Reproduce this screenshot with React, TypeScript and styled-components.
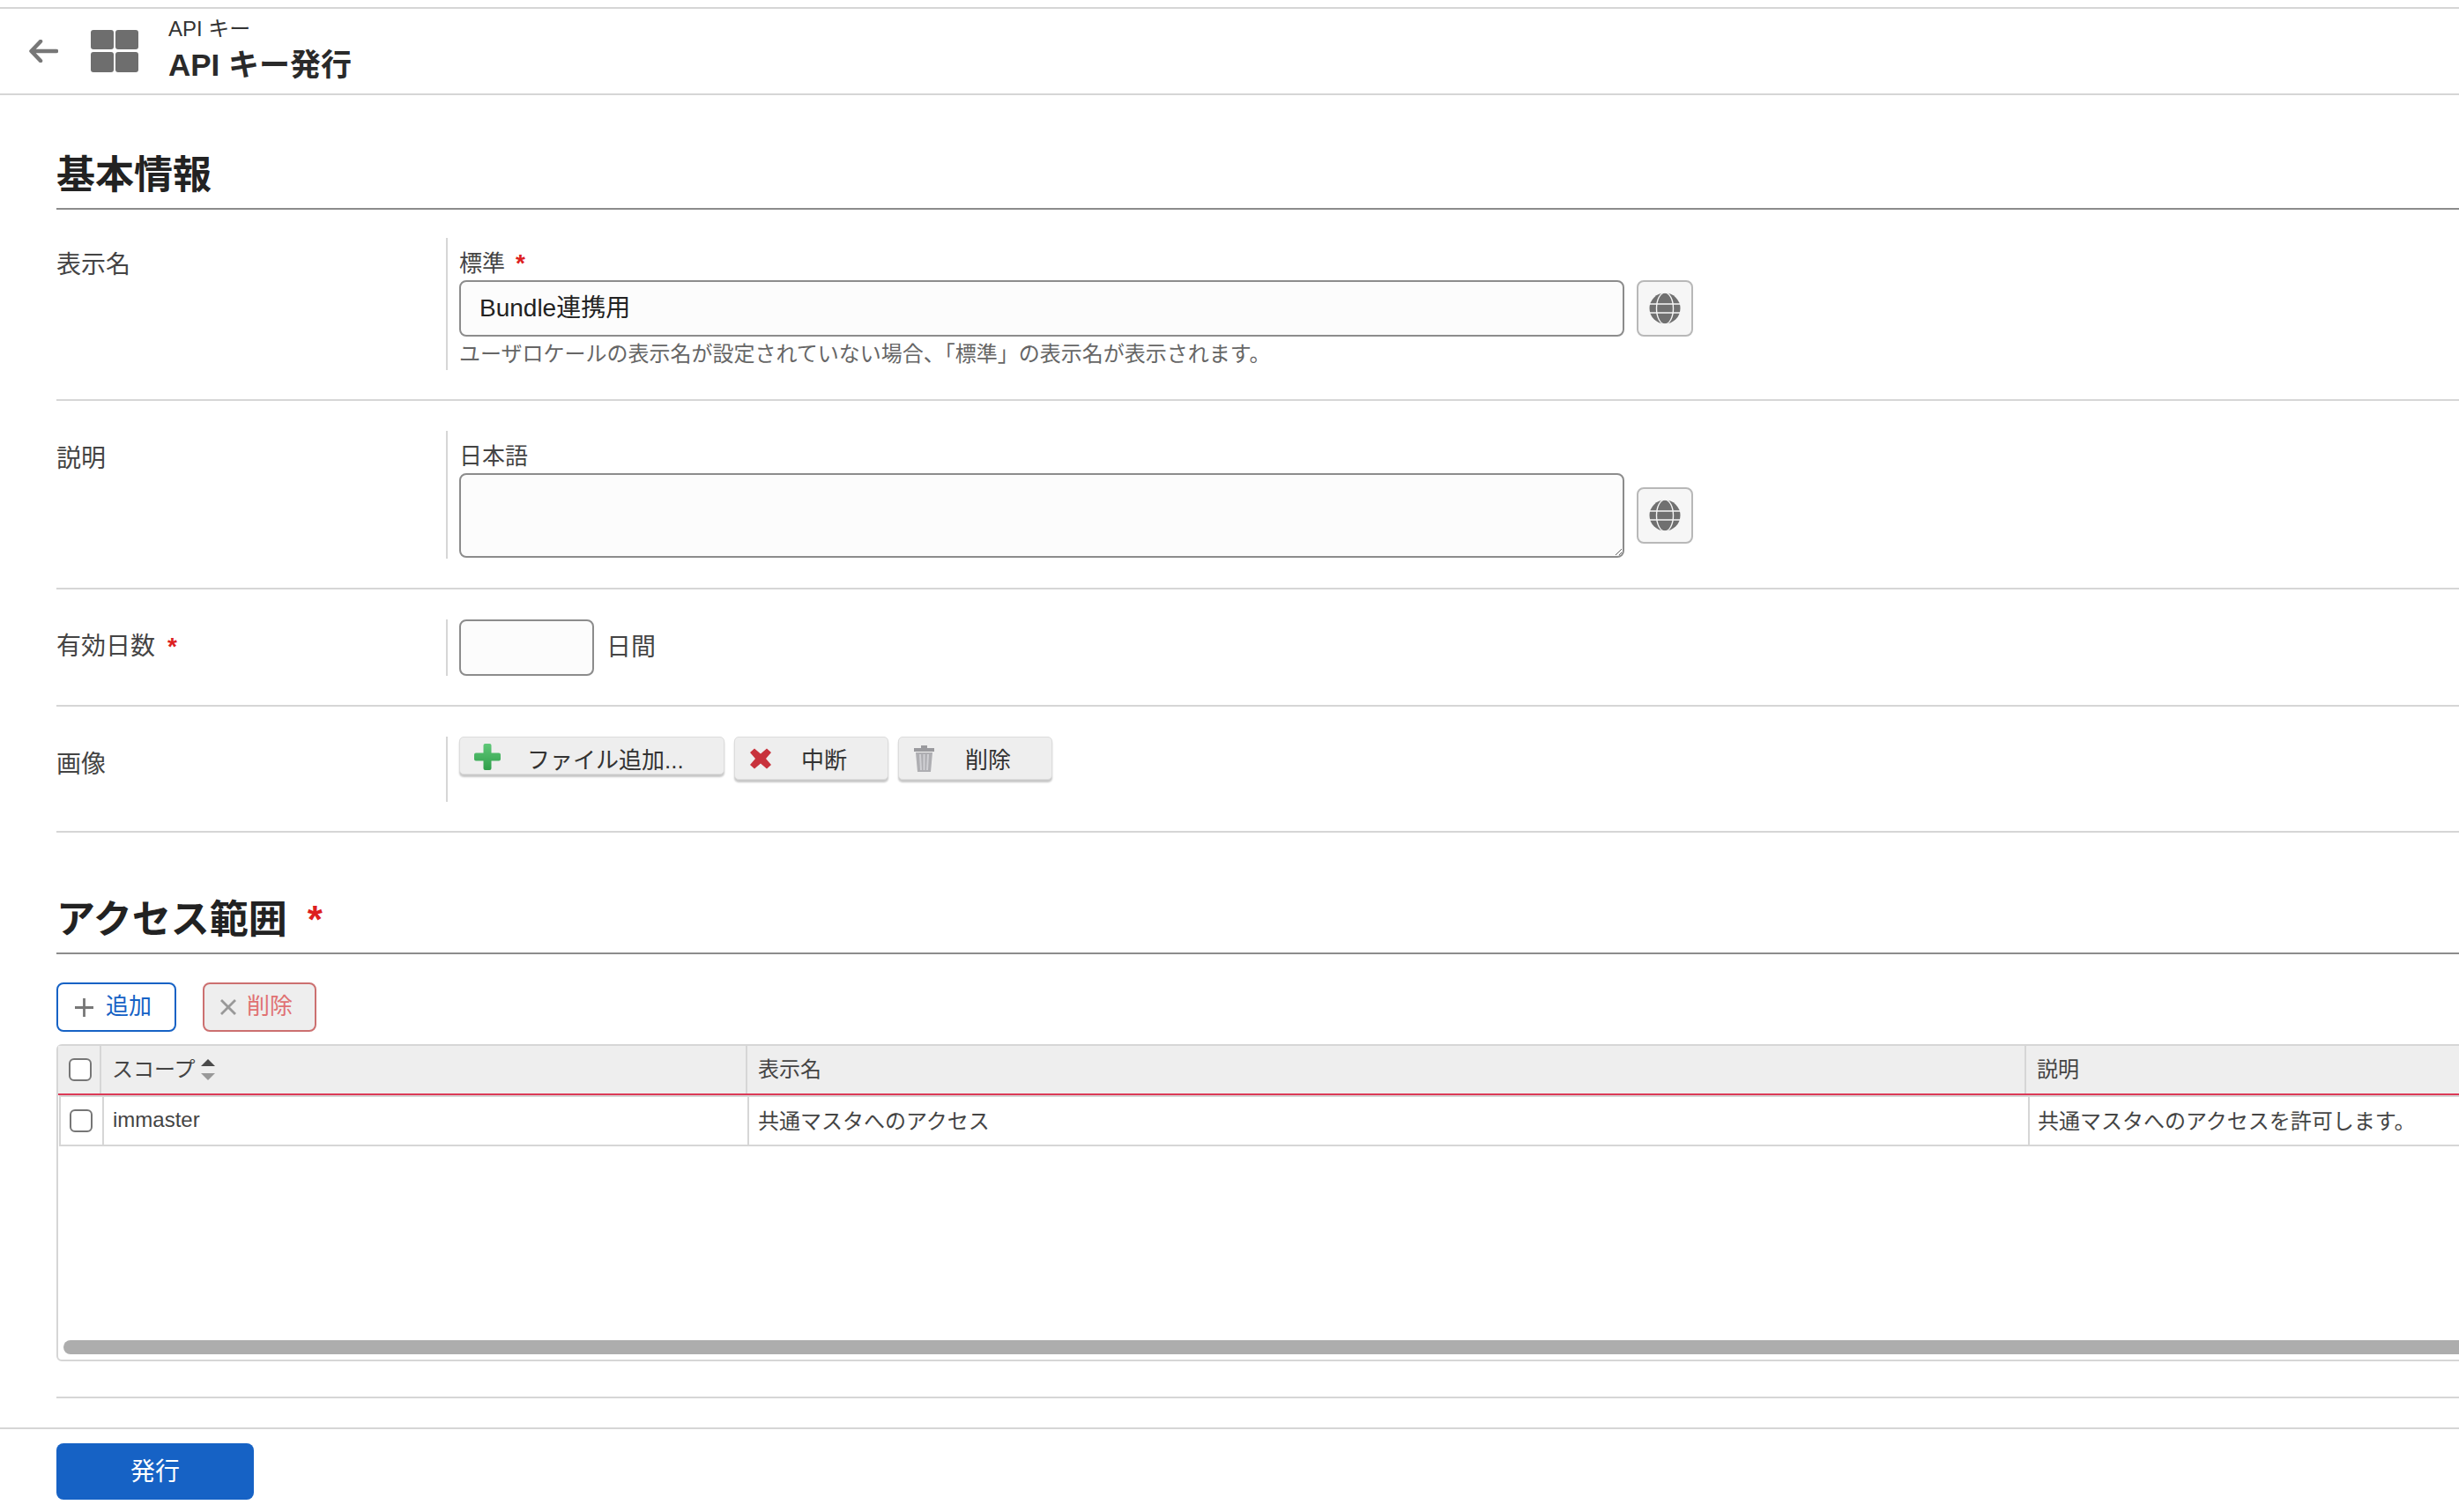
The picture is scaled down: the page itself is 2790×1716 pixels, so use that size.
import styled, { createGlobalStyle } from 'styled-components';

const GlobalStyle = createGlobalStyle`
  html, body {
    margin: 0;
    padding: 0;
    background: #fff;
    overflow: hidden;
  }

  body {
    font-family: 'Liberation Sans', 'Noto Sans CJK JP', sans-serif;
    color: #444;
    font-size: 28px;
  }

  * {
    box-sizing: border-box;
  }
`;

const Page = styled.div`
  width: 2790px;
  height: 1716px;
  overflow: hidden;
  padding-top: 8px;
`;

const Header = styled.header`
  display: flex;
  align-items: center;
  height: 100px;
  border-top: 2px solid #d6d6d6;
  border-bottom: 2px solid #d6d6d6;
  padding-left: 33px;
`;

const BackIcon = styled.svg`
  width: 33px;
  height: 26px;
  margin-right: 37px;
`;

const AppIcon = styled.svg`
  width: 54px;
  height: 48px;
  margin-right: 34px;
`;

const Titles = styled.div`
  display: flex;
  flex-direction: column;
  gap: 5px;
  padding-bottom: 3px;
`;

const Crumb = styled.div`
  font-size: 24px;
  line-height: 30px;
  color: #333;
`;

const Title = styled.h1`
  margin: 0;
  font-size: 35px;
  line-height: 42px;
  font-weight: 700;
  color: #2a2a2a;
`;

const Main = styled.main`
  padding-left: 64px;
`;

const SectionHeading = styled.h2<{ $top: number; $height: number }>`
  margin: 0;
  padding-top: ${(p) => p.$top}px;
  height: ${(p) => p.$height}px;
  line-height: 52px;
  font-size: 44px;
  font-weight: 700;
  color: #222;
  border-bottom: 2px solid #8c8c8c;
`;

const Required = styled.span<{ $size?: number; $gap?: number }>`
  color: #dd1f1f;
  font-weight: 700;
  font-size: ${(p) => p.$size ?? 28}px;
  margin-left: ${(p) => p.$gap ?? 12}px;
`;

const FormRow = styled.section<{ $top: number; $bottom: number }>`
  display: flex;
  padding: ${(p) => p.$top}px 0 ${(p) => p.$bottom}px;
  border-bottom: 2px solid #d6d6d6;
`;

const RowLabel = styled.div<{ $offset: number }>`
  width: 442px;
  flex: none;
  padding-top: ${(p) => p.$offset}px;
  font-size: 28px;
  line-height: 36px;
  color: #444;
`;

const Field = styled.div<{ $height: number }>`
  border-left: 2px solid #d6d6d6;
  padding-left: 13px;
  height: ${(p) => p.$height}px;
  flex: 1;
`;

const FieldLabel = styled.div`
  height: 48px;
  padding-top: 12px;
  font-size: 26px;
  line-height: 34px;
  color: #444;
`;

const InputRow = styled.div`
  display: flex;
  align-items: center;
  gap: 14px;
`;

const TextInput = styled.input<{ $width: number }>`
  width: ${(p) => p.$width}px;
  height: 64px;
  border: 2px solid #8c8c8c;
  border-radius: 8px;
  background: #fcfcfc;
  padding: 0 21px 6px;
  font-family: inherit;
  font-size: 28px;
  color: #222;
  outline: none;
`;

const TextArea = styled.textarea`
  display: block;
  width: 1322px;
  height: 96px;
  border: 2px solid #8c8c8c;
  border-radius: 8px;
  background: #fcfcfc;
  resize: vertical;
  outline: none;
`;

const GlobeButton = styled.button`
  display: flex;
  align-items: center;
  justify-content: center;
  width: 64px;
  height: 64px;
  padding: 0;
  border: 2px solid #b8b8b8;
  border-radius: 8px;
  background: #f6f6f6;
`;

const Hint = styled.div`
  padding-top: 5px;
  font-size: 24px;
  line-height: 30px;
  color: #666;
`;

const Unit = styled.span`
  margin: 0 0 6px;
  font-size: 28px;
  color: #444;
`;

const UploadBar = styled.div`
  display: flex;
  align-items: flex-start;
  gap: 11px;
`;

const UploadButton = styled.button<{ $width: number; $height: number; $iconGap: number }>`
  display: flex;
  align-items: center;
  gap: ${(p) => p.$iconGap}px;
  width: ${(p) => p.$width}px;
  height: ${(p) => p.$height}px;
  padding: ${(p) => 49 - p.$height}px 0 0 16px;
  border: 1px solid #dcdcdc;
  border-radius: 5px;
  background: #eee;
  box-shadow: 0 3px 2px #c8c8c8;
  font-family: inherit;
  font-size: 26px;
  color: #333;
  white-space: nowrap;
`;

const UploadIcon = styled.svg<{ $lift?: number }>`
  flex: none;
  margin-bottom: ${(p) => p.$lift ?? 0}px;
  filter: blur(0.5px);
`;

const Toolbar = styled.div`
  display: flex;
  gap: 30px;
  padding: 32px 0 14px;
`;

const ActionButton = styled.button<{ $danger?: boolean }>`
  display: flex;
  align-items: center;
  gap: ${(p) => (p.$danger ? 12 : 14)}px;
  height: 56px;
  width: ${(p) => (p.$danger ? 129 : 136)}px;
  padding: 0 0 0 ${(p) => (p.$danger ? 18 : 19)}px;
  border: 2px solid ${(p) => (p.$danger ? '#cc7070' : '#1662c5')};
  border-radius: 8px;
  background: ${(p) => (p.$danger ? '#eee' : '#fff')};
  color: ${(p) => (p.$danger ? '#e07272' : '#1662c5')};
  font-family: inherit;
  font-size: 26px;
`;

const ButtonLabel = styled.span`
  margin-bottom: 7px;
`;

const GridBox = styled.div`
  height: 360px;
  width: 2760px;
  border: 2px solid #d6d6d6;
  border-radius: 6px 0 0 6px;
  display: flex;
  flex-direction: column;
`;

const HeadRow = styled.div`
  display: grid;
  grid-template-columns: 49px 733px 1451px 1fr;
  height: 56px;
  background: #eee;
  border-bottom: 2px solid #dc3a57;
`;

const HeadCell = styled.div<{ $pad?: number }>`
  display: flex;
  align-items: center;
  gap: 6px;
  padding-left: ${(p) => p.$pad ?? 12}px;
  font-size: 24px;
  color: #444;
  border-right: 2px solid #d6d6d6;

  &:last-child {
    border-right: none;
  }
`;

const CellText = styled.span<{ $raise: number }>`
  margin-bottom: ${(p) => p.$raise}px;
`;

const BodyRow = styled.div`
  display: grid;
  grid-template-columns: 49px 732px 1453px 1fr;
  height: 58px;
  margin-left: 1px;
  border-top: 2px solid #d6d6d6;
  border-bottom: 2px solid #d6d6d6;
  border-left: 2px solid #d6d6d6;
`;

const BodyCell = styled.div<{ $pad?: number }>`
  display: flex;
  align-items: center;
  padding-left: ${(p) => p.$pad ?? 10}px;
  font-size: 24px;
  color: #444;
  border-right: 2px solid #d6d6d6;

  &:last-child {
    border-right: none;
  }
`;

const CheckBox = styled.input`
  appearance: none;
  flex: none;
  width: 26px;
  height: 26px;
  margin: 0;
  border: 2px solid #767676;
  border-radius: 6px;
  background: #fff;
`;

const GridSpace = styled.div`
  flex: 1;
`;

const ScrollThumb = styled.div`
  height: 16px;
  margin: 0 0 6px 6px;
  border-radius: 8px;
  background: #adadad;
`;

const EndRule = styled.div`
  height: 2px;
  margin-top: 40px;
  background: #d6d6d6;
`;

const Footer = styled.footer`
  margin-top: 33px;
  padding: 16px 0 0 64px;
  border-top: 2px solid #d6d6d6;
`;

const SubmitButton = styled.button`
  width: 224px;
  height: 64px;
  padding: 0 0 5px;
  border: none;
  border-radius: 8px;
  background: #1662c5;
  color: #fff;
  font-family: inherit;
  font-size: 28px;
`;

function GlobeIcon() {
  return (
    <svg width="36" height="36" viewBox="0 0 36 36">
      <circle cx="18" cy="18" r="17.5" fill="#707070" />
      <g fill="none" stroke="#f6f6f6" strokeWidth="1.4">
        <ellipse cx="18" cy="18" rx="9.5" ry="18" />
        <path d="M0 13h36M0 23h36" />
      </g>
    </svg>
  );
}

function PlusIcon() {
  return (
    <UploadIcon $lift={4} width="30" height="30" viewBox="0 0 30 30">
      <defs>
        <linearGradient id="plusFill" x1="0" y1="0" x2="0" y2="1">
          <stop offset="0" stopColor="#5fc878" />
          <stop offset="1" stopColor="#2f9e4a" />
        </linearGradient>
      </defs>
      <path
        d="M10.500 2a2 2 0 0 1 2-2h5a2 2 0 0 1 2 2v8.500H28a2 2 0 0 1 2 2v5a2 2 0 0 1-2 2h-8.500V28a2 2 0 0 1-2 2h-5a2 2 0 0 1-2-2v-8.500H2a2 2 0 0 1-2-2v-5a2 2 0 0 1 2-2h8.500z"
        fill="url(#plusFill)"
      />
    </UploadIcon>
  );
}

function CrossIcon() {
  return (
    <UploadIcon width="26" height="24" viewBox="0 0 26 24">
      <path
        d="M6 0.500l7 6 7-6 5 4.500-6 7 6 7-5 4.500-7-6-7 6-5-4.500 6-7-6-7z"
        fill="#c8323c"
        strokeLinejoin="round"
      />
    </UploadIcon>
  );
}

function TrashIcon() {
  return (
    <UploadIcon width="25" height="30" viewBox="0 0 25 30">
      <path d="M9 0h7v3h8v4H1V3h8z" fill="#9a9a9e" />
      <path d="M3 8h19l-2 22H5z" fill="#aeaeb2" />
      <path d="M8 10l1 18M12.500 10v18M17 10l-1 18" stroke="#d0d0d4" strokeWidth="2" />
    </UploadIcon>
  );
}

export default function App() {
  return (
    <Page>
      <GlobalStyle />
      <Header>
        <BackIcon viewBox="0 0 33 26">
          <path
            d="M31 13H3M13 2L2.500 13 13 24"
            fill="none"
            stroke="#777"
            strokeWidth="4.500"
            strokeLinecap="round"
            strokeLinejoin="round"
          />
        </BackIcon>
        <AppIcon viewBox="0 0 54 48">
          <rect x="0" y="0" width="26" height="22" rx="3" fill="#6e6e6e" />
          <rect x="28" y="0" width="26" height="22" rx="3" fill="#6e6e6e" />
          <rect x="0" y="25" width="26" height="23" rx="3" fill="#6e6e6e" />
          <rect x="28" y="25" width="26" height="23" rx="3" fill="#6e6e6e" />
        </AppIcon>
        <Titles>
          <Crumb>API キー</Crumb>
          <Title>API キー発行</Title>
        </Titles>
      </Header>

      <Main>
        <SectionHeading $top={65} $height={130}>
          基本情報
        </SectionHeading>

        <FormRow $top={32} $bottom={33}>
          <RowLabel $offset={13}>表示名</RowLabel>
          <Field $height={150}>
            <FieldLabel>
              標準<Required>*</Required>
            </FieldLabel>
            <InputRow>
              <TextInput $width={1322} defaultValue="Bundle連携用" />
              <GlobeButton>
                <GlobeIcon />
              </GlobeButton>
            </InputRow>
            <Hint>ユーザロケールの表示名が設定されていない場合、「標準」の表示名が表示されます。</Hint>
          </Field>
        </FormRow>

        <FormRow $top={34} $bottom={33}>
          <RowLabel $offset={14}>説明</RowLabel>
          <Field $height={145}>
            <FieldLabel>日本語</FieldLabel>
            <InputRow>
              <TextArea />
              <GlobeButton>
                <GlobeIcon />
              </GlobeButton>
            </InputRow>
          </Field>
        </FormRow>

        <FormRow $top={34} $bottom={33}>
          <RowLabel $offset={13}>
            有効日数<Required $gap={14}>*</Required>
          </RowLabel>
          <Field $height={64}>
            <InputRow>
              <TextInput $width={153} />
              <Unit>日間</Unit>
            </InputRow>
          </Field>
        </FormRow>

        <FormRow $top={34} $bottom={33}>
          <RowLabel $offset={14}>画像</RowLabel>
          <Field $height={74}>
            <UploadBar>
              <UploadButton $width={301} $height={43} $iconGap={30}>
                <PlusIcon />
                ファイル追加...
              </UploadButton>
              <UploadButton $width={175} $height={49} $iconGap={33}>
                <CrossIcon />
                中断
              </UploadButton>
              <UploadButton $width={175} $height={49} $iconGap={34}>
                <TrashIcon />
                削除
              </UploadButton>
            </UploadBar>
          </Field>
        </FormRow>

        <SectionHeading $top={73} $height={138}>
          アクセス範囲<Required $size={44} $gap={23}>*</Required>
        </SectionHeading>

        <Toolbar>
          <ActionButton>
            <svg width="21" height="21" viewBox="0 0 21 21">
              <path d="M10.500 0v21M0 10.500h21" stroke="#777" strokeWidth="2.800" />
            </svg>
            <ButtonLabel>追加</ButtonLabel>
          </ActionButton>
          <ActionButton $danger>
            <svg width="18" height="18" viewBox="0 0 18 18">
              <path d="M1 1l16 16M17 1L1 17" stroke="#999" strokeWidth="2.800" />
            </svg>
            <ButtonLabel>削除</ButtonLabel>
          </ActionButton>
        </Toolbar>

        <GridBox>
          <HeadRow>
            <HeadCell $pad={12}>
              <CheckBox type="checkbox" />
            </HeadCell>
            <HeadCell>
              <CellText $raise={5}>スコープ</CellText>
              <svg width="16" height="24" viewBox="0 0 16 24">
                <path d="M8 0l8 8H0z" fill="#4a4a4a" />
                <path d="M8 24l8-8H0z" fill="#999" />
              </svg>
            </HeadCell>
            <HeadCell>
              <CellText $raise={5}>表示名</CellText>
            </HeadCell>
            <HeadCell>
              <CellText $raise={5}>説明</CellText>
            </HeadCell>
          </HeadRow>
          <BodyRow>
            <BodyCell>
              <CheckBox type="checkbox" />
            </BodyCell>
            <BodyCell>
              <CellText $raise={2}>immaster</CellText>
            </BodyCell>
            <BodyCell>
              <CellText $raise={4}>共通マスタへのアクセス</CellText>
            </BodyCell>
            <BodyCell $pad={9}>
              <CellText $raise={4}>共通マスタへのアクセスを許可します。</CellText>
            </BodyCell>
          </BodyRow>
          <GridSpace />
          <ScrollThumb />
        </GridBox>

        <EndRule />
      </Main>

      <Footer>
        <SubmitButton>発行</SubmitButton>
      </Footer>
    </Page>
  );
}
